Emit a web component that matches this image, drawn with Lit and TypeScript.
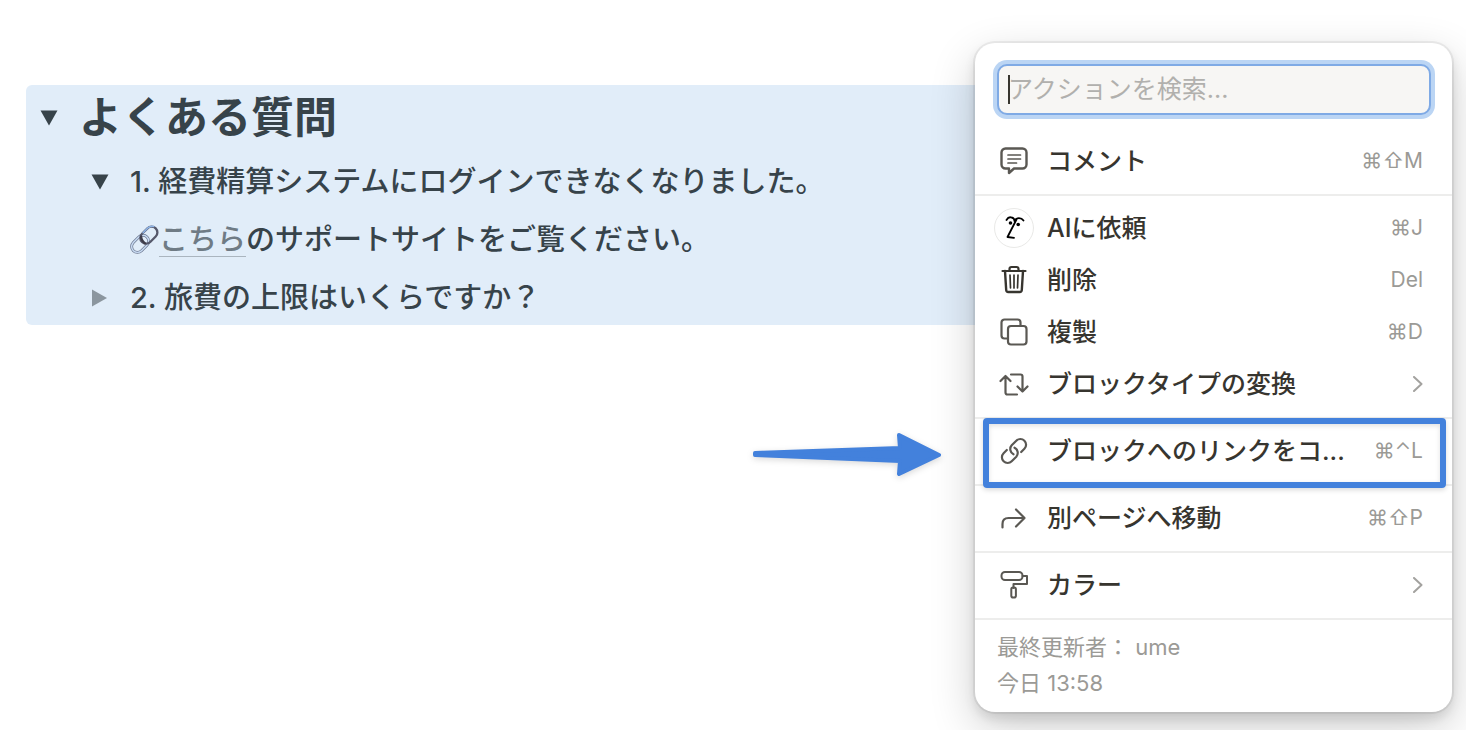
import { LitElement, html, css, svg } from "lit";
import { customElement } from "lit/decorators.js";

interface MenuItem {
  label: string;
  icon: keyof typeof icons;
  shortcut?: string;
  submenu?: boolean;
}

interface MenuGroup {
  items: MenuItem[];
  highlighted?: boolean;
}

const icons = {
  comment: svg`<path d="M5.5 1.500h17A4 4 0 0 1 26.500 5.500v12a4 4 0 0 1-4 4H14l-5 4.500v-4.500H5.500a4 4 0 0 1-4-4V5.500a4 4 0 0 1 4-4z" stroke-width="2.400"/><path d="M8 8h12.500M8 12h12.500M8 16h8.500" stroke-width="1.700"/>`,
  ai: svg`<circle cx="14" cy="14" r="19.500" fill="#fff" stroke="#e9e9e7" stroke-width="1"/><g stroke="#000" stroke-width="1.800"><path d="M6.500 6q2-3.500 5-2.500 3 .5 3 3.500M14.500 7c2-4 7-3.500 9-.5M16.500 5.500L7.500 23l6.500.8"/></g><circle cx="10.500" cy="9" r="1.800" fill="#000" stroke="none"/><circle cx="18.200" cy="10.500" r="1.800" fill="#000" stroke="none"/>`,
  trash: svg`<g stroke="#37352f"><path d="M2.500 5h23" stroke-width="2.200"/><path d="M9.500 5V3Q9.500 1 11.500 1h5Q18.500 1 18.500 3v2" stroke-width="2.200"/><path d="M5 5l1.200 19Q6.300 26 8.300 26h11.400q2 0 2.100-2L23 5" stroke-width="2.400"/><path d="M10 9l.5 13M14 9v13M18 9l-.5 13" stroke-width="1.700"/></g>`,
  copy: svg`<rect x="8" y="8" width="18.500" height="18.500" rx="3" stroke-width="2.200"/><path d="M8 20.500H4.500a3 3 0 0 1-3-3v-13a3 3 0 0 1 3-3h13a3 3 0 0 1 3 3V8" stroke-width="2.200"/>`,
  turn: svg`<g stroke-width="2.200"><path d="M5.500 6v16.500q0 2 2 2H17M0.500 11l5-5 5 5M11 4.500h9.500q2 0 2 2V21.500M17.500 16.500l5 5 5-5"/></g>`,
  link: svg`<g stroke-width="2.200"><path d="M13.500 17.300a5.800 5.800 0 0 1-1.800-9l4.600-4.600a5.700 5.700 0 0 1 8.100 0a5.700 5.700 0 0 1 0 8.100l-3.200 3.200"/><path d="M14.500 10.700a5.800 5.800 0 0 1 1.800 9l-4.600 4.600a5.700 5.700 0 0 1-8.100 0a5.700 5.700 0 0 1 0-8.100l3.200-3.200"/></g>`,
  move: svg`<path d="M2.500 23.500v-3.500q0-6 6-6h16M16 5.500l8.500 8.500-8.500 8.500" stroke-width="2.200"/>`,
  roller: svg`<g stroke-width="2"><rect x="1.500" y="1" width="21" height="8" rx="3.500"/><path d="M22.500 5h4.500v8H13.500v4"/><rect x="11.300" y="16.500" width="4.600" height="10" rx="1.800"/></g>`,
};

const menu: MenuGroup[] = [
  { items: [{ label: "コメント", icon: "comment", shortcut: "⌘⇧M" }] },
  {
    items: [
      { label: "AIに依頼", icon: "ai", shortcut: "⌘J" },
      { label: "削除", icon: "trash", shortcut: "Del" },
      { label: "複製", icon: "copy", shortcut: "⌘D" },
      { label: "ブロックタイプの変換", icon: "turn", submenu: true },
    ],
  },
  {
    highlighted: true,
    items: [{ label: "ブロックへのリンクをコ...", icon: "link", shortcut: "⌘⌃L" }],
  },
  { items: [{ label: "別ページへ移動", icon: "move", shortcut: "⌘⇧P" }] },
  { items: [{ label: "カラー", icon: "roller", submenu: true }] },
];

@customElement("action-menu")
export class ActionMenu extends LitElement {
  static styles = css`
    :host {
      display: block;
      box-sizing: border-box;
      padding-top: 21px;
      border-radius: 20px;
      background: #fff;
      color: #37352f;
      box-shadow: 0 0 0 2px rgba(15, 15, 15, 0.06),
        0 6px 12px rgba(15, 15, 15, 0.12), 0 16px 46px rgba(15, 15, 15, 0.2);
    }
    .search {
      position: relative;
      margin: 0 21px 20px 22px;
    }
    .field {
      display: block;
      box-sizing: border-box;
      width: 100%;
      height: 51px;
      padding: 0 9px 2px;
      border: 2px solid #7faae5;
      border-radius: 10px;
      outline: none;
      background: #f7f6f4;
      box-shadow: 0 0 0 4px #bbd5f4;
      color: inherit;
      font: inherit;
      font-size: 25px;
    }
    .field::placeholder {
      color: #b1b0ad;
      opacity: 1;
    }
    .caret {
      position: absolute;
      left: 11px;
      top: 11px;
      width: 2px;
      height: 29px;
      background: #37352f;
    }
    .group {
      position: relative;
      padding-bottom: 7px;
      border-bottom: 2px solid #ededec;
    }
    .group + .group {
      padding-top: 6px;
    }
    .item {
      display: flex;
      align-items: center;
      box-sizing: border-box;
      width: 100%;
      height: 52px;
      padding: 0 29px 0 25px;
      border: 0;
      background: none;
      color: inherit;
      font: inherit;
      text-align: left;
      cursor: pointer;
    }
    .icon {
      flex: none;
      width: 28px;
      height: 28px;
      margin-right: 19px;
      overflow: visible;
      fill: none;
      stroke: #5a5853;
      stroke-linecap: round;
      stroke-linejoin: round;
    }
    .label {
      flex: 1;
      font-size: 25px;
      font-weight: 500;
      line-height: 36px;
      white-space: nowrap;
    }
    .shortcut {
      color: #9b9a96;
      font-size: 21px;
      line-height: 36px;
    }
    .chevron {
      width: 10px;
      height: 16px;
      fill: none;
      stroke: #a3a29f;
      stroke-width: 2;
      stroke-linecap: round;
      stroke-linejoin: round;
    }
    .frame {
      position: absolute;
      inset: -1px 6px -4px 8px;
      border: 6px solid #4381dc;
      border-radius: 4px;
      box-shadow: 0 2px 5px rgba(0, 0, 0, 0.15),
        inset 0 2px 5px rgba(0, 0, 0, 0.12);
      pointer-events: none;
    }
    .pointer {
      position: absolute;
      right: calc(100% + 32px);
      top: 11px;
      width: 192px;
      height: 48px;
      overflow: visible;
      fill: #4381dc;
      stroke: #4381dc;
      stroke-width: 4;
      stroke-linejoin: round;
      filter: drop-shadow(0 2px 3px rgba(0, 0, 0, 0.15));
    }
    .meta {
      padding: 9px 22px 11px;
      color: #9b9a96;
      font-size: 22px;
      line-height: 36px;
    }
    .line {
      margin: 0;
    }
  `;

  private renderItem(item: MenuItem) {
    return html`<button class="item" type="button" role="menuitem">
      <svg class="icon" viewBox="0 0 28 28" aria-hidden="true">${icons[item.icon]}</svg>
      <span class="label">${item.label}</span>
      ${item.submenu
        ? html`<svg class="chevron" viewBox="0 0 10 16" aria-hidden="true"><path d="M1 1l7.500 7L1 15" /></svg>`
        : html`<span class="shortcut">${item.shortcut}</span>`}
    </button>`;
  }

  render() {
    return html`
      <div class="search">
        <input class="field" type="text" placeholder="アクションを検索..." aria-label="アクションを検索" />
        <span class="caret"></span>
      </div>
      <div role="menu">
        ${menu.map(
          (group) => html`<div class="group" role="group">
            ${group.items.map((item) => this.renderItem(item))}
            ${group.highlighted
              ? html`<div class="frame"></div>
                  <svg class="pointer" viewBox="0 0 192 48" aria-hidden="true">
                    <path d="M4 23L149 18 148 5 188 25 148 44 149 31 4 25z" />
                  </svg>`
              : null}
          </div>`
        )}
      </div>
      <footer class="meta">
        <p class="line">最終更新者： ume</p>
        <p class="line">今日 13:58</p>
      </footer>
    `;
  }
}

@customElement("app-root")
export class AppRoot extends LitElement {
  static styles = css`
    :host {
      display: block;
      position: relative;
      box-sizing: border-box;
      min-height: 100vh;
      padding: 85px 200px 0 26px;
      overflow: hidden;
      background: #fff;
      color: #37434a;
      font-family: Inter, "Noto Sans CJK JP", sans-serif;
    }
    .block {
      border-radius: 6px;
      background: #e1edf9;
    }
    .head,
    .row {
      display: flex;
      align-items: center;
      box-sizing: border-box;
    }
    .head {
      height: 67px;
      padding: 0 0 2px 14px;
    }
    .title {
      margin: 0;
      font-size: 43px;
      font-weight: 700;
      line-height: 65px;
    }
    .list {
      display: flex;
      flex-direction: column;
      gap: 1px;
      margin: 0;
      padding: 0 0 0 65px;
      list-style: none;
    }
    .row {
      height: 57px;
      padding-top: 2px;
      font-size: 29px;
      font-weight: 500;
      line-height: 40px;
    }
    .toggle {
      flex: none;
      width: 18px;
      height: 18px;
      margin-right: 21px;
      padding: 0;
      border: 0;
      background: none;
      color: inherit;
      cursor: pointer;
    }
    .closed {
      color: #8b969f;
    }
    .triangle {
      display: block;
      width: 18px;
      height: 18px;
      fill: currentColor;
    }
    .text {
      margin: 0;
      white-space: nowrap;
    }
    .answer {
      padding-left: 39px;
    }
    .chain {
      flex: none;
      width: 29px;
      height: 29px;
      overflow: visible;
      fill: none;
    }
    .link {
      display: inline-block;
      height: 34px;
      line-height: 36px;
      border-bottom: 1px solid #aab5bf;
      color: #6f7b85;
      text-decoration: none;
    }
    .menu {
      position: absolute;
      top: 43px;
      right: 14px;
      width: 477px;
    }
  `;

  private toggle(open: boolean, name: string) {
    return html`<button
      class="toggle ${open ? "" : "closed"}"
      type="button"
      aria-expanded=${open ? "true" : "false"}
      aria-label=${name}
    >
      <svg class="triangle" viewBox="0 0 18 18" aria-hidden="true">
        <path d=${open ? "M0.500 1.500h17L9 16.500z" : "M1 0.500v17L16 9z"} />
      </svg>
    </button>`;
  }

  render() {
    return html`
      <main class="block">
        <div class="head">
          ${this.toggle(true, "よくある質問")}
          <h1 class="title">よくある質問</h1>
        </div>
        <ul class="list">
          <li class="row">
            ${this.toggle(true, "質問 1")}
            <p class="text">1. 経費精算システムにログインできなくなりました。</p>
          </li>
          <li class="row answer">
            <svg class="chain" viewBox="0 0 30 30" aria-hidden="true">
              <g stroke-linecap="round">
                <rect x="-10" y="-6" width="20" height="12" rx="6" transform="translate(10.500 19.500) rotate(-45)" stroke="#6d7890" stroke-width="3" />
                <rect x="-10" y="-6" width="20" height="12" rx="6" transform="translate(10.500 19.500) rotate(-45)" stroke="#c9dcf4" stroke-width="1.500" />
                <rect x="-10" y="-6" width="20" height="12" rx="6" transform="translate(19.500 10.500) rotate(-45)" stroke="#55586b" stroke-width="2.400" />
                <path d="M13.500 8l5-5q3-2.500 6-1.500" stroke="#8fb4e6" stroke-width="1.600" />
                <path d="M11.500 12q0 4 4 7" stroke="#3d3b48" stroke-width="2.400" />
              </g>
            </svg>
            <p class="text"><a class="link" href="#support">こちら</a>のサポートサイトをご覧ください。</p>
          </li>
          <li class="row">
            ${this.toggle(false, "質問 2")}
            <p class="text">2. 旅費の上限はいくらですか？</p>
          </li>
        </ul>
      </main>
      <action-menu class="menu"></action-menu>
    `;
  }
}
